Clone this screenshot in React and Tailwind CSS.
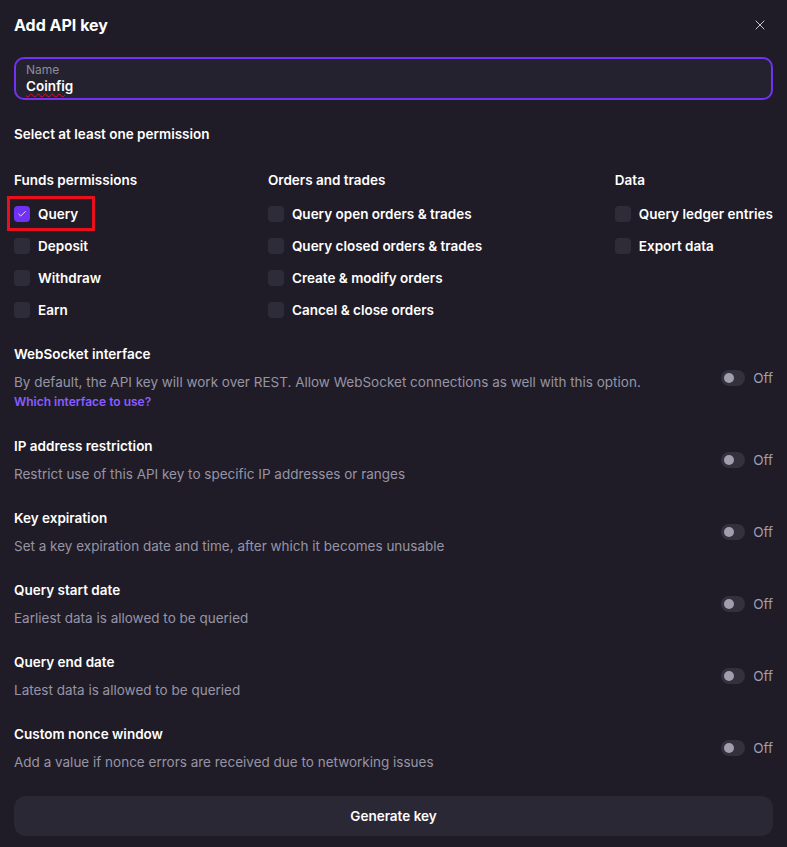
import React, { useState } from 'react';
import { X, Check } from 'lucide-react';

const font = { fontFamily: 'Inter, "Noto Sans", sans-serif' };

const funds = ['Query', 'Deposit', 'Withdraw', 'Earn'];
const orders = ['Query open orders & trades', 'Query closed orders & trades', 'Create & modify orders', 'Cancel & close orders'];
const data = ['Query ledger entries', 'Export data'];

const settings = [
    { title: 'WebSocket interface', desc: 'By default, the API key will work over REST. Allow WebSocket connections as well with this option.', link: 'Which interface to use?' },
    { title: 'IP address restriction', desc: 'Restrict use of this API key to specific IP addresses or ranges' },
    { title: 'Key expiration', desc: 'Set a key expiration date and time, after which it becomes unusable' },
    { title: 'Query start date', desc: 'Earliest data is allowed to be queried' },
    { title: 'Query end date', desc: 'Latest data is allowed to be queried' },
    { title: 'Custom nonce window', desc: 'Add a value if nonce errors are received due to networking issues' },
];

const Checkbox = ({ label, checked, onToggle, marked }) => (
    <label className="relative flex items-center gap-2 h-8 cursor-pointer" onClick={onToggle}>
        {marked && <span className="absolute -left-[7px] top-[-2px] w-[88px] h-[35px] border-[3px] border-[#e8101d] pointer-events-none"></span>}
        <span className={`w-4 h-4 shrink-0 rounded-[4px] flex items-center justify-center ${checked ? 'bg-[#7132f5]' : 'bg-[#2f2c3a]'}`}>
            {checked && <Check size={10} strokeWidth={2} className="text-white" />}
        </span>
        <span className="text-[13.5px] font-semibold text-white whitespace-nowrap">{label}</span>
    </label>
);

const Toggle = () => (
    <div className="flex items-center gap-2 shrink-0">
        <div className="w-6 h-4 rounded-full bg-[#34313f] flex items-center px-[3px]">
            <span className="w-[10px] h-[10px] rounded-full bg-[#a19eae]"></span>
        </div>
        <span className="text-[13.5px] text-[#a19eae]">Off</span>
    </div>
);

const Column = ({ title, items, className, checked, setChecked }) => (
    <div className={className}>
        <div className="text-[13.5px] font-semibold text-white h-5 leading-5 mb-2">{title}</div>
        {items.map((item) => (
            <Checkbox
                key={item}
                label={item}
                checked={!!checked[item]}
                marked={item === 'Query'}
                onToggle={() => setChecked({ ...checked, [item]: !checked[item] })}
            />
        ))}
    </div>
);

export default function App() {
    const [checked, setChecked] = useState({ Query: true });

    return (
        <div className="min-h-screen w-full bg-[#1f1c27] text-white" style={font}>
            <div className="px-[14px] pt-[15px] pb-3">
                {/* Header */}
                <div className="flex items-center justify-between h-5">
                    <h2 className="text-[16px] font-bold leading-5">Add API key</h2>
                    <X size={16} strokeWidth={1.5} className="text-[#c9c6d3] mr-[5px]" />
                </div>

                {/* Name input */}
                <div className="mt-[22px] h-[43px] rounded-[10px] border-2 border-[#7132f5] bg-[#25222f] px-[10px] flex flex-col justify-center">
                    <span className="text-[12px] leading-[14px] text-[#8e8b9a]">Name</span>
                    <span className="text-[13.5px] leading-[18px] font-semibold text-white">
                        <span className="underline decoration-wavy decoration-[#e0141e] decoration-1 underline-offset-2">Coinfig</span>
                    </span>
                </div>

                <div className="mt-[24px] text-[13.5px] font-semibold leading-5">Select at least one permission</div>

                {/* Permissions */}
                <div className="mt-[26px] flex">
                    <Column title="Funds permissions" items={funds} className="w-[254px]" checked={checked} setChecked={setChecked} />
                    <Column title="Orders and trades" items={orders} className="w-[347px]" checked={checked} setChecked={setChecked} />
                    <Column title="Data" items={data} className="flex-1" checked={checked} setChecked={setChecked} />
                </div>

                {/* Optional settings */}
                <div className="mt-[18px] flex flex-col gap-6">
                    {settings.map((s) => (
                        <div key={s.title} className="flex items-center justify-between gap-4">
                            <div>
                                <div className="text-[13.5px] font-semibold leading-5">{s.title}</div>
                                <div className="mt-2 text-[13.5px] leading-5 text-[#9794a5]">{s.desc}</div>
                                {s.link && <div className="text-[12px] font-semibold leading-5 text-[#8a5cff] cursor-pointer">{s.link}</div>}
                            </div>
                            <Toggle />
                        </div>
                    ))}
                </div>

                <button className="mt-6 w-full h-[40px] rounded-[12px] bg-[#2b2836] text-[13.5px] font-semibold text-white">
                    Generate key
                </button>
            </div>
        </div>
    );
}
